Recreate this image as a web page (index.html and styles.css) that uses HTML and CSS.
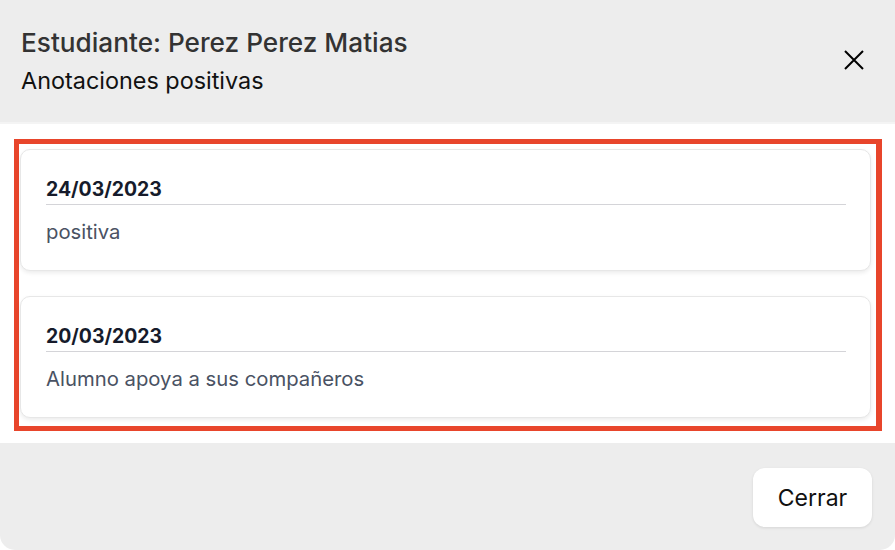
FILE: index.html
```html
<!DOCTYPE html>
<html lang="es">
<head>
<meta charset="utf-8">
<title>Anotaciones positivas</title>
<link rel="stylesheet" href="styles.css">
</head>
<body>
<div class="dialog">
  <header class="dialog-header">
    <div class="titles">
      <h1 class="title">Estudiante: Perez Perez Matias</h1>
      <p class="subtitle">Anotaciones positivas</p>
    </div>
    <button class="close" aria-label="Cerrar">
      <svg width="20" height="20" viewBox="0 0 20 20"><path d="M1 1 L19 19 M19 1 L1 19" stroke="#000" stroke-width="2" fill="none"/></svg>
    </button>
  </header>
  <main class="dialog-body">
    <div class="highlight">
      <div class="card">
        <div class="date">24/03/2023</div>
        <div class="desc">positiva</div>
      </div>
      <div class="card">
        <div class="date">20/03/2023</div>
        <div class="desc">Alumno apoya a sus compañeros</div>
      </div>
    </div>
  </main>
  <footer class="dialog-footer">
    <button class="btn">Cerrar</button>
  </footer>
</div>
</body>
</html>
```
FILE: styles.css
```css
* { box-sizing: border-box; }
html, body { margin: 0; padding: 0; background: #ffffff; }
body { font-family: Inter, "Noto Sans", sans-serif; }
.dialog {
  width: 895px;
  height: 550px;
  display: flex;
  flex-direction: column;
  background: #ffffff;
  border-radius: 0 0 15px 15px;
  overflow: hidden;
}
.dialog-header {
  height: 124px;
  background: #ededed;
  border-bottom: 2px solid #f4f4f4;
  display: flex;
  align-items: flex-start;
  justify-content: space-between;
  padding: 27px 31px 0 21px;
}
.title {
  margin: 0;
  font-size: 26.2px;
  line-height: 32px;
  font-weight: 500;
  color: #333333;
}
.subtitle {
  margin: 8px 0 0;
  font-size: 23.4px;
  line-height: 28px;
  font-weight: 400;
  color: #111111;
}
.close {
  margin-top: 23px;
  width: 20px;
  height: 20px;
  padding: 0;
  border: 0;
  background: transparent;
  display: flex;
}
.dialog-body {
  flex: 1;
  padding: 15px 13px 11px 14px;
}
.highlight {
  border: 5px solid #e8452b;
  border-right-width: 6px;
  padding: 5px 5px 8px 1px;
  display: flex;
  flex-direction: column;
  gap: 25px;
}
.card {
  height: 122px;
  background: #ffffff;
  border: 1px solid #e7e7e7;
  border-radius: 10px;
  box-shadow: 0 2px 4px rgba(0,0,0,0.08);
  padding: 27px 24px 0 25px;
}
.date {
  font-size: 19.4px;
  line-height: 24px;
  font-weight: 700;
  color: #161b2b;
  padding-bottom: 3px;
  border-bottom: 1px solid #d4d4d8;
}
.desc {
  margin-top: 15px;
  font-size: 20.3px;
  line-height: 24px;
  color: #4a5263;
}
.dialog-footer {
  height: 107px;
  background: #ededed;
  display: flex;
  justify-content: flex-end;
  align-items: flex-start;
  padding: 25px 23px 0 0;
}
.btn {
  width: 119px;
  height: 59px;
  background: #ffffff;
  border: 0;
  border-radius: 12px;
  box-shadow: 0 1px 3px rgba(0,0,0,0.1);
  font-family: Inter, "Noto Sans", sans-serif;
  font-size: 23px;
  color: #111111;
}
```
